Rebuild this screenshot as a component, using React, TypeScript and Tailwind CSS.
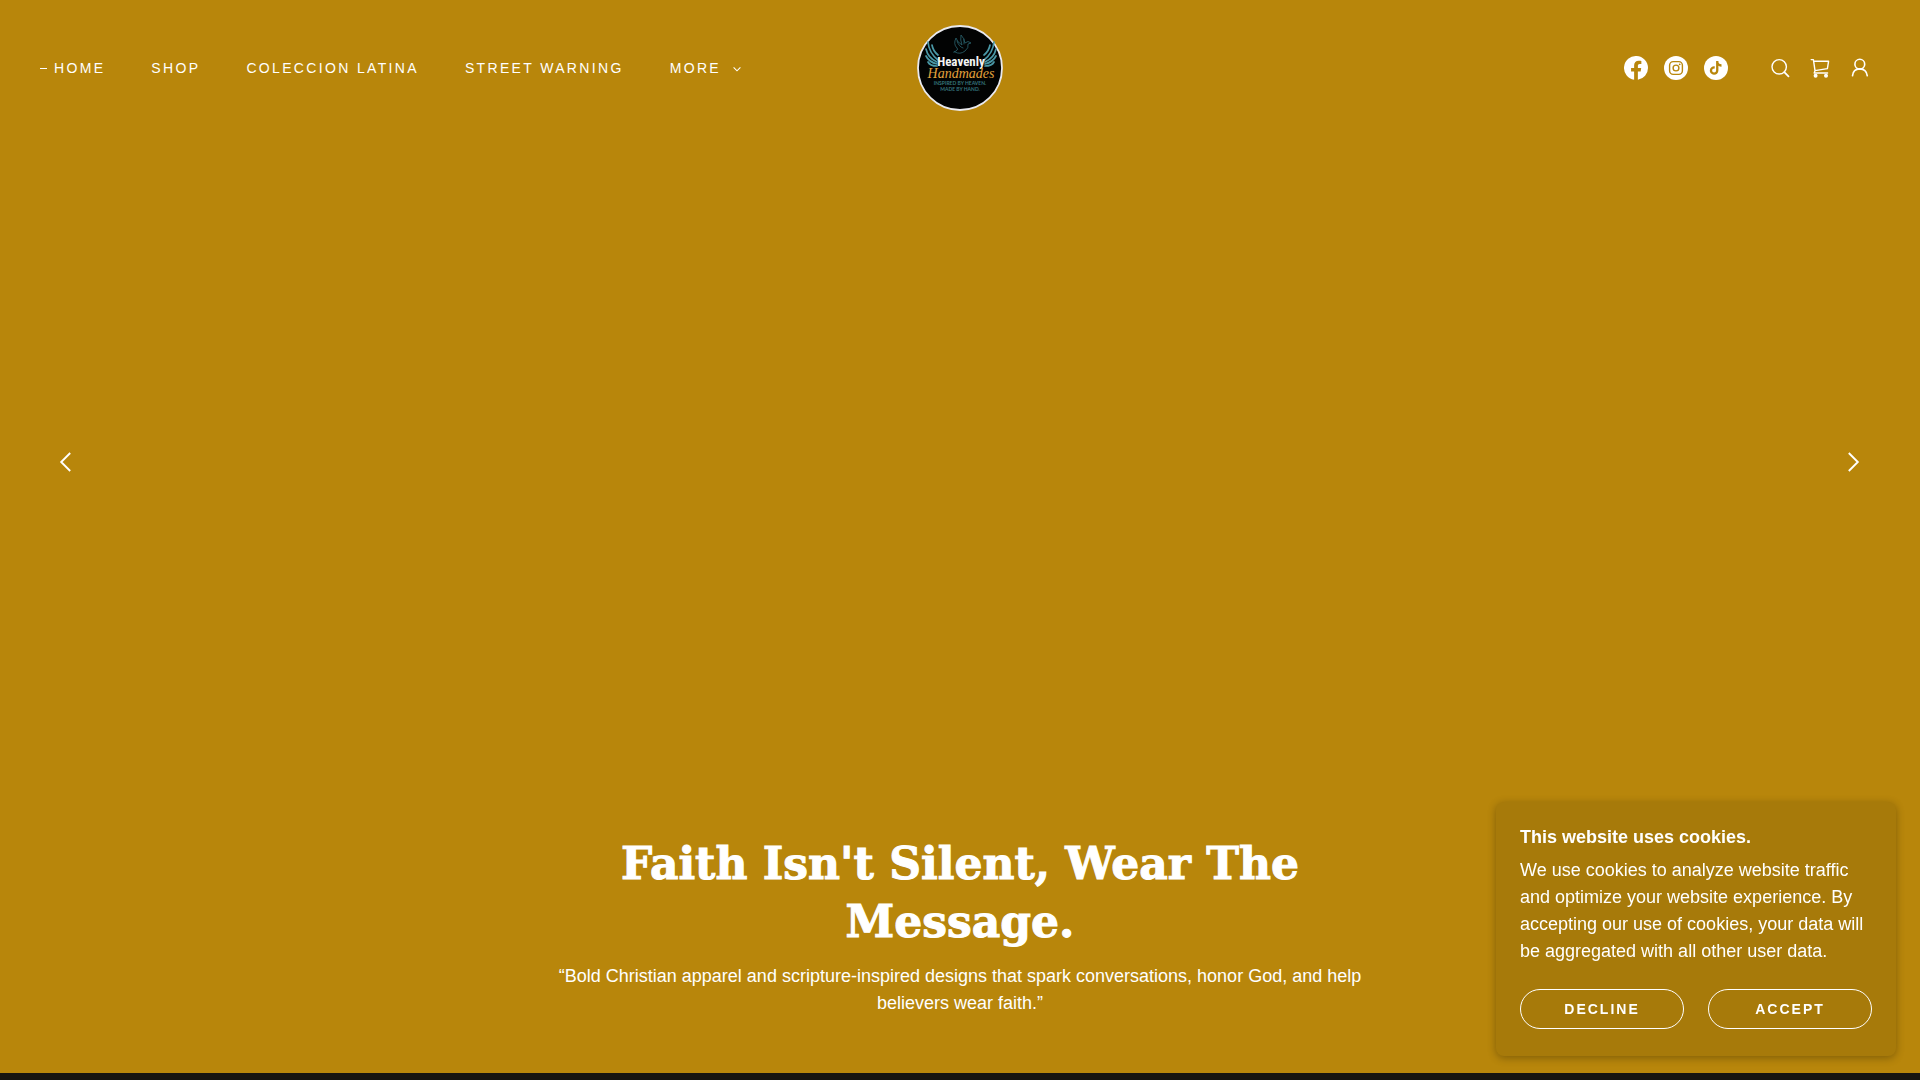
import React from "react";

const links = ["Shop", "Coleccion Latina", "Street Warning"];

const Logo = () => {
  return (
    <svg viewBox="0 0 86 86" className="block w-[86px] h-[86px]" role="img" aria-label="Heavenly Handmades">
      <circle cx="43" cy="43" r="42" fill="#020303" stroke="#e9e9ee" strokeWidth="1.8" />
      {/* dove */}
      <g fill="none" stroke="#2b6470" strokeWidth="0.8" strokeLinecap="round" strokeLinejoin="round">
        <path d="M38 27 Q43 30 48 26 Q52 23 51 19 L54 18 Q51 15 48 18 Q47 13 44 10 Q43 15 45 20 Q40 17 39 13 Q36 19 40 23 Q42 25 37 27 Z" />
        <path d="M40 16 Q42 22 46 23 M47 14 V19" />
      </g>
      {/* wings */}
      <g fill="none" stroke="#4a98a6" strokeWidth="1.7" strokeLinecap="round">
        <path d="M21 35 Q12 28 11 17" />
        <path d="M21 30 Q16 26 15 20" />
        <path d="M20 37 Q11 33 9 24" />
        <path d="M20 39 Q12 37 9 31" />
        <path d="M20 41 Q13 41 11 37" />
        <path d="M67 35 Q76 28 77 17" />
        <path d="M67 30 Q72 26 73 20" />
        <path d="M68 37 Q77 33 79 24" />
        <path d="M68 39 Q76 37 79 31" />
        <path d="M68 41 Q75 41 77 37" />
      </g>
      <g textAnchor="middle">
        <text x="44" y="41" fontSize="13" fontWeight="700" fill="#f4f4f4" className="font-['Liberation_Sans_Narrow','Roboto_Condensed','Liberation_Sans',sans-serif]">
          Heavenly
        </text>
        <text x="44" y="53" fontSize="14" fontStyle="italic" fontWeight="400" fill="#e5a23c" className="font-['Liberation_Serif',serif]">
          Handmades
        </text>
        <text x="43" y="60" fontSize="5" fontWeight="700" fill="#35757c" className="font-[Lato,sans-serif]">
          INSPIRED BY HEAVEN.
        </text>
        <text x="43" y="66" fontSize="5" fontWeight="700" fill="#35757c" className="font-[Lato,sans-serif]">
          MADE BY HAND.
        </text>
      </g>
    </svg>
  );
};

const Facebook = () => (
  <svg viewBox="0 0 24 24" className="size-6" fill="currentColor">
    <path d="M24 12A12 12 0 1 0 10.13 23.85v-8.38H7.08V12h3.05V9.36c0-3.01 1.79-4.67 4.53-4.67 1.31 0 2.69.23 2.69.23v2.96h-1.52c-1.49 0-1.95.93-1.95 1.87V12h3.32l-.53 3.47h-2.8v8.38A12 12 0 0 0 24 12z" />
  </svg>
);

const Instagram = () => (
  <svg viewBox="0 0 24 24" className="size-6" fill="none">
    <circle cx="12" cy="12" r="12" fill="currentColor" />
    <rect x="5.6" y="5.6" width="12.8" height="12.8" rx="3.6" stroke="#b8860b" strokeWidth="1.4" />
    <circle cx="12" cy="12" r="2.9" stroke="#b8860b" strokeWidth="1.4" />
    <circle cx="15.7" cy="8.3" r="0.9" fill="#b8860b" />
  </svg>
);

const TikTok = () => (
  <svg viewBox="0 0 24 24" className="size-6" fill="none">
    <circle cx="12" cy="12" r="12" fill="currentColor" />
    <path
      d="M14.4 5h-2.3v9.6a2 2 0 1 1-2-2c.2 0 .4 0 .6.1v-2.4a4.3 4.3 0 1 0 3.7 4.3V9.7a5.4 5.4 0 0 0 3.1 1V8.3A3.1 3.1 0 0 1 14.4 5z"
      fill="#b8860b"
    />
  </svg>
);

const Search = () => (
  <svg viewBox="0 0 24 24" className="size-6" fill="none" stroke="currentColor" strokeWidth="1.4">
    <circle cx="11.2" cy="10.8" r="7.2" />
    <path d="M16.3 16.2l4.2 4.2" strokeWidth="1.8" strokeLinecap="round" />
  </svg>
);

const Cart = () => (
  <svg viewBox="0 0 24 24" className="size-6" fill="none" stroke="currentColor" strokeWidth="1.4" strokeLinecap="round" strokeLinejoin="round">
    <path d="M3.2 3.6H5.4L7 14.6M5.8 5.2H20.6L19.4 12.6 7 14.6M7 14.6L6.2 17H19.6" />
    <circle cx="7.6" cy="19.8" r="1.3" fill="currentColor" />
    <circle cx="18" cy="19.8" r="1.3" fill="currentColor" />
  </svg>
);

const User = () => (
  <svg viewBox="0 0 24 24" className="size-6" fill="none" stroke="currentColor" strokeWidth="1.6" strokeLinecap="round">
    <circle cx="11.8" cy="8.2" r="4.9" />
    <path d="M4.5 19.8C4.9 15.6 7.6 12.9 11.8 12.9S18.7 15.6 19.3 19.8" />
  </svg>
);

const Header = () => {
  return (
    <header className="grid grid-cols-[1fr_auto_1fr] items-center px-10 pt-[25px] pb-[25px]">
      <nav className="flex items-center gap-[46px] text-sm uppercase tracking-[0.167em] whitespace-nowrap">
        <a href="#" className="flex items-center gap-[7px]">
          <span className="w-[7px] h-px bg-white" />
          Home
        </a>
        {links.map((link) => (
          <a key={link} href="#">
            {link}
          </a>
        ))}
        <button className="flex items-center gap-[11px] uppercase tracking-[0.167em]">
          More
          <svg viewBox="0 0 10 10" className="size-[10px] mt-[2px]" fill="none" stroke="currentColor" strokeWidth="1.1">
            <path d="M1.6 3.4L5 6.8l3.4-3.4" />
          </svg>
        </button>
      </nav>

      <a href="#">
        <Logo />
      </a>

      <div className="flex items-center justify-end gap-10 pr-2">
        <div className="flex gap-4">
          <a href="#" aria-label="Facebook"><Facebook /></a>
          <a href="#" aria-label="Instagram"><Instagram /></a>
          <a href="#" aria-label="TikTok"><TikTok /></a>
        </div>
        <div className="flex gap-4">
          <button aria-label="Search"><Search /></button>
          <button aria-label="Cart"><Cart /></button>
          <button aria-label="Account"><User /></button>
        </div>
      </div>
    </header>
  );
};

const CookieBanner = () => {
  return (
    <aside className="fixed bottom-6 right-6 w-[400px] rounded-lg bg-[#a77a0a] px-6 pt-[22px] pb-[27px] shadow-[0_2px_8px_rgba(0,0,0,0.3)]">
      <h2 className="mb-[6px] text-lg leading-[27px] font-bold">This website uses cookies.</h2>
      <p className="text-lg leading-[27px]">
        We use cookies to analyze website traffic and optimize your website experience. By accepting our use of
        cookies, your data will be aggregated with all other user data.
      </p>
      <div className="mt-6 grid grid-cols-2 gap-6">
        <button className="h-10 rounded-full border border-white text-sm font-bold uppercase tracking-[0.143em]">
          Decline
        </button>
        <button className="h-10 rounded-full border border-white text-sm font-bold uppercase tracking-[0.143em]">
          Accept
        </button>
      </div>
    </aside>
  );
};

const App = () => {
  return (
    <div className="flex min-h-screen flex-col bg-[#161410] font-['Liberation_Sans',Arial,sans-serif] text-white">
      <section className="flex min-h-[calc(100vh-7px)] flex-col bg-[#b8860b]">
        <Header />

        <div className="flex flex-1 items-center justify-between px-[54px]">
          <button aria-label="Previous slide">
            <svg viewBox="0 0 24 24" className="size-6" fill="none" stroke="currentColor" strokeWidth="1.9">
              <path d="M16.2 3L7.2 12l9 9" />
            </svg>
          </button>
          <button aria-label="Next slide">
            <svg viewBox="0 0 24 24" className="size-6" fill="none" stroke="currentColor" strokeWidth="1.9">
              <path d="M6.8 3l9 9-9 9" />
            </svg>
          </button>
        </div>

        <div className="mx-auto w-full max-w-[840px] pt-12 pb-14 text-center">
          <h1 className="mb-3 text-[44px] leading-[58px] font-bold font-['DejaVu_Serif',serif] [-webkit-text-stroke:1px_white]">
            Faith Isn't Silent, Wear The Message.
          </h1>
          <p className="text-lg leading-[27px]">
            “Bold Christian apparel and scripture-inspired designs that spark conversations, honor God, and help
            believers wear faith.”
          </p>
        </div>
      </section>

      <CookieBanner />
    </div>
  );
};

export default App;
